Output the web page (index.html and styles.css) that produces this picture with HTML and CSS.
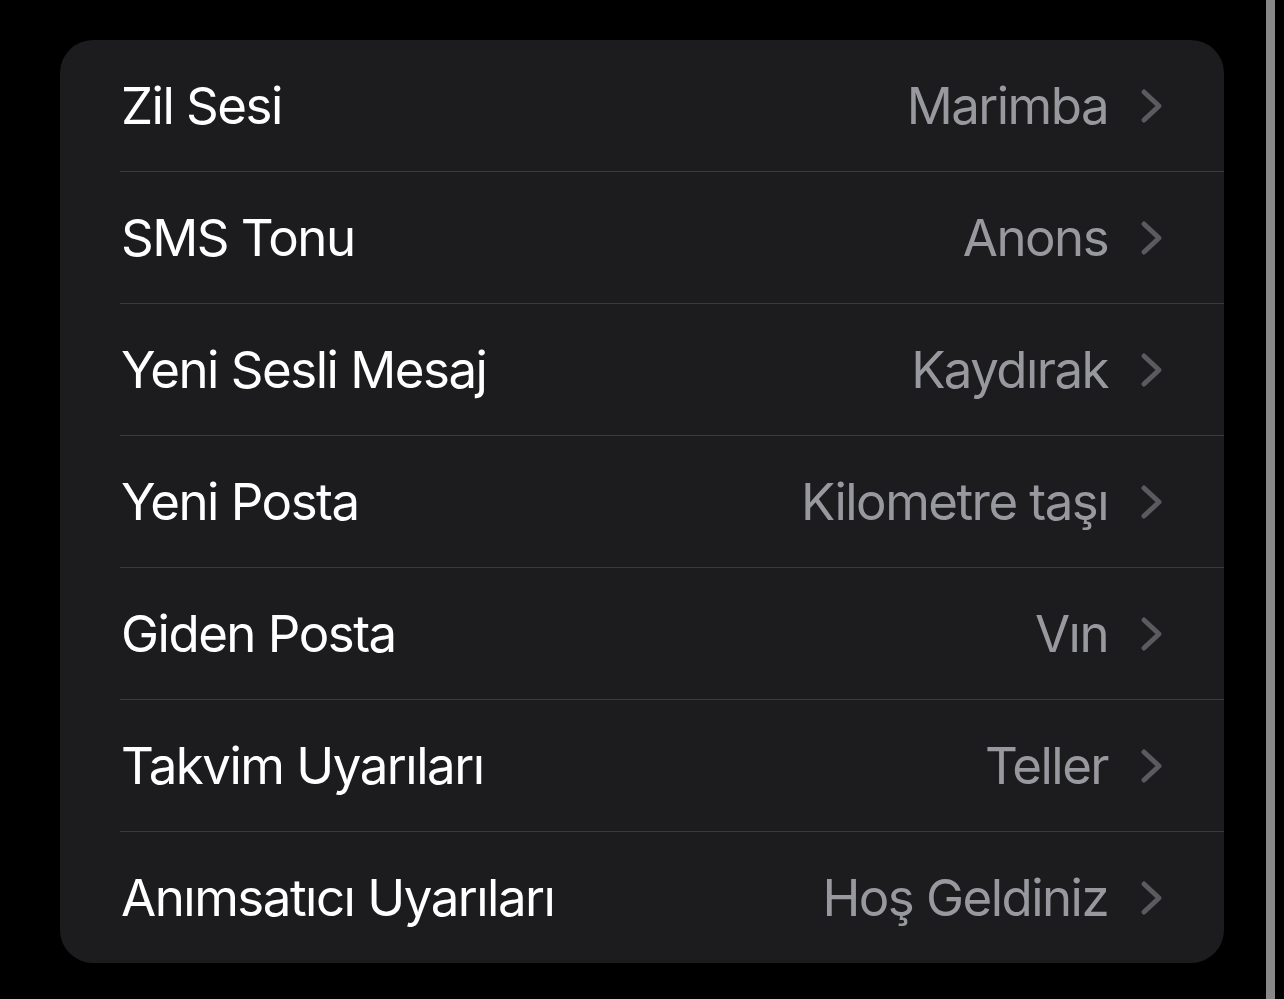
FILE: index.html
```html
<!DOCTYPE html>
<html lang="tr">
<head>
<meta charset="utf-8">
<link rel="stylesheet" href="styles.css">
</head>
<body>
<div class="page">
  <div class="content">
    <ul class="card">
      <li class="row"><span class="label">Zil Sesi</span><span class="value">Marimba</span><svg class="chev" viewBox="0 0 24 36"><path d="M4 4 L19 18 L4 32"/></svg></li>
      <li class="row"><span class="label">SMS Tonu</span><span class="value">Anons</span><svg class="chev" viewBox="0 0 24 36"><path d="M4 4 L19 18 L4 32"/></svg></li>
      <li class="row"><span class="label">Yeni Sesli Mesaj</span><span class="value">Kaydırak</span><svg class="chev" viewBox="0 0 24 36"><path d="M4 4 L19 18 L4 32"/></svg></li>
      <li class="row"><span class="label">Yeni Posta</span><span class="value">Kilometre taşı</span><svg class="chev" viewBox="0 0 24 36"><path d="M4 4 L19 18 L4 32"/></svg></li>
      <li class="row"><span class="label">Giden Posta</span><span class="value">Vın</span><svg class="chev" viewBox="0 0 24 36"><path d="M4 4 L19 18 L4 32"/></svg></li>
      <li class="row"><span class="label">Takvim Uyarıları</span><span class="value">Teller</span><svg class="chev" viewBox="0 0 24 36"><path d="M4 4 L19 18 L4 32"/></svg></li>
      <li class="row"><span class="label">Anımsatıcı Uyarıları</span><span class="value">Hoş Geldiniz</span><svg class="chev" viewBox="0 0 24 36"><path d="M4 4 L19 18 L4 32"/></svg></li>
    </ul>
  </div>
  <div class="edge"></div>
</div>
</body>
</html>
```
FILE: styles.css
```css
html, body {
  margin: 0;
  padding: 0;
  background: #000;
  height: 100%;
}
body {
  font-family: Inter, "Noto Sans", sans-serif;
  -webkit-font-smoothing: antialiased;
}
.page {
  display: flex;
  height: 999px;
  overflow: hidden;
}
.content {
  width: 1164px;
  padding: 40px 0 0 60px;
}
.edge {
  width: 9px;
  margin-left: 42px;
  background: #888888;
}
.card {
  list-style: none;
  margin: 0;
  padding: 0;
  background: #1c1c1e;
  border-radius: 33px;
  overflow: hidden;
}
.row {
  display: flex;
  align-items: center;
  height: 131px;
  margin-left: 60px;
  padding-right: 60px;
  border-bottom: 1px solid #3a3a3c;
}
.row:last-child {
  border-bottom: none;
}
.label {
  flex: 1;
  margin-left: 1px;
  color: #ffffff;
  font-size: 51px;
  letter-spacing: -1.5px;
}
.value {
  color: #98989f;
  font-size: 51px;
  letter-spacing: -1.55px;
}
.chev {
  width: 24px;
  height: 36px;
  margin-left: 32px;
  fill: none;
  stroke: #5a5a5f;
  stroke-width: 5;
  stroke-linecap: round;
  stroke-linejoin: round;
}
```
